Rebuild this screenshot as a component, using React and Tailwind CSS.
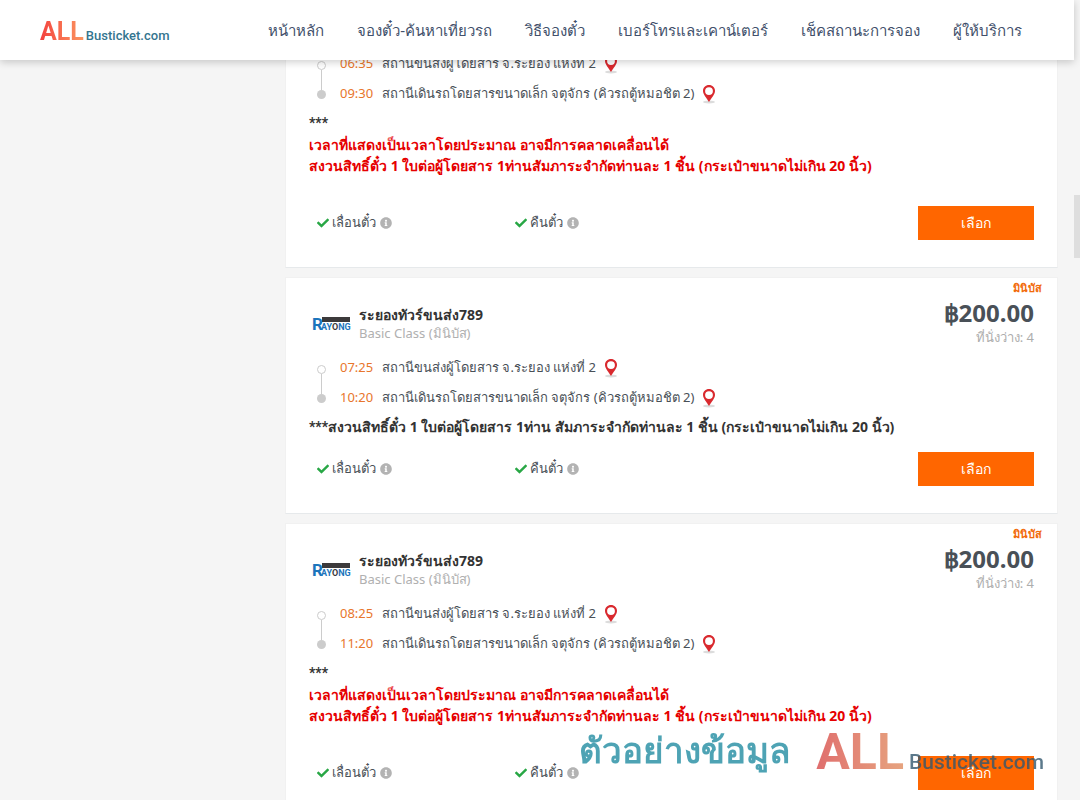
import { FaCheck, FaInfoCircle } from 'react-icons/fa'

const NAV_ITEMS = [
  'หน้าหลัก',
  'จองตั๋ว-ค้นหาเที่ยวรถ',
  'วิธีจองตั๋ว',
  'เบอร์โทรและเคาน์เตอร์',
  'เช็คสถานะการจอง',
  'ผู้ให้บริการ',
]

const FROM = 'สถานีขนส่งผู้โดยสาร จ.ระยอง แห่งที่ 2'
const TO = 'สถานีเดินรถโดยสารขนาดเล็ก จตุจักร (คิวรถตู้หมอชิต 2)'
const OPERATOR = 'ระยองทัวร์ขนส่ง789'

const RED_NOTES = [
  'เวลาที่แสดงเป็นเวลาโดยประมาณ อาจมีการคลาดเคลื่อนได้',
  'สงวนสิทธิ์ตั๋ว 1 ใบต่อผู้โดยสาร 1ท่านสัมภาระจำกัดท่านละ 1 ชิ้น (กระเป๋าขนาดไม่เกิน 20 นิ้ว)',
]

const TRIPS = [
  { id: 1, depart: '06:35', arrive: '09:30', note: '', warnings: RED_NOTES },
  {
    id: 2,
    operator: OPERATOR,
    depart: '07:25',
    arrive: '10:20',
    note: 'สงวนสิทธิ์ตั๋ว 1 ใบต่อผู้โดยสาร 1ท่าน สัมภาระจำกัดท่านละ 1 ชิ้น (กระเป๋าขนาดไม่เกิน 20 นิ้ว)',
    warnings: [],
  },
  { id: 3, operator: OPERATOR, depart: '08:25', arrive: '11:20', note: '', warnings: RED_NOTES },
]

function PinIcon() {
  return (
    <svg width="16" height="20" viewBox="0 0 16 20" aria-hidden="true">
      <ellipse cx="8" cy="18" rx="6" ry="1.5" fill="#dcdcdc" />
      <path
        fillRule="evenodd"
        fill="#d9292e"
        d="M8 1C4.600 1 2 3.500 2 6.700 2 10.500 5.500 13.500 8 18c2.500-4.500 6-7.500 6-11.300C14 3.500 11.400 1 8 1zm0 2.200a3.900 3.900 0 1 1 0 7.800 3.900 3.900 0 0 1 0-7.800z"
      />
    </svg>
  )
}

function RayongLogo() {
  return (
    <svg width="40" height="18" viewBox="0 0 40 18" role="img" aria-label="Rayong" fontFamily="Roboto" fontWeight="700">
      <rect x="11" y="1" width="28" height="5" fill="#3c3a3b" />
      <text x="1" y="14" fontSize="17" fill="#1c75bc">R</text>
      <text x="10" y="14" fontSize="9" fill="#1c75bc">
        AY<tspan fill="#3c3a3b">O</tspan>NG
      </text>
    </svg>
  )
}

function Stop({ time, place }) {
  return (
    <li className="flex h-[30px] items-center">
      <time className="w-[42px] shrink-0 text-[#e8762c]">{time}</time>
      <span className="text-[#495057]">{place}</span>
      <button type="button" aria-label="แผนที่" className="ml-[7px] cursor-pointer">
        <PinIcon />
      </button>
    </li>
  )
}

function Option({ label }) {
  return (
    <div className="flex w-[198px] items-center gap-[3px] text-[#495057]">
      <FaCheck className="size-3 text-[#28a745]" />
      <span>{label}</span>
      <FaInfoCircle className="ml-px size-3 text-[#b3b3b3]" />
    </div>
  )
}

function TripHeader({ operator }) {
  return (
    <>
      <span className="absolute top-1 right-[15px] text-[11px] leading-3 font-bold text-[#f26a0a]">มินิบัส</span>
      <header className="box-content flex h-[54px] items-start justify-between pt-[21px]">
        <div className="flex items-center gap-2 pt-[6px]">
          <div className="pt-1 pl-[2px]">
            <RayongLogo />
          </div>
          <div>
            <h2 className="text-sm leading-5 font-bold text-[#333]">{operator}</h2>
            <p className="leading-4 text-[#b0b0b0]">Basic Class (มินิบัส)</p>
          </div>
        </div>
        <div className="text-right">
          <p className="text-2xl leading-7 font-bold text-[#495057]">฿200.00</p>
          <p className="leading-5 text-[#adadad]">ที่นั่งว่าง: 4</p>
        </div>
      </header>
    </>
  )
}

function TripCard({ trip }) {
  return (
    <article className="relative border border-[#f1f1f1] border-b-[#e6e9eb] bg-white px-[23px] pb-[27px] text-[13px]">
      {trip.operator && <TripHeader operator={trip.operator} />}

      <div className="flex">
        <div className="mt-3 flex w-[31px] flex-col items-start pl-2">
          <span className="size-[9px] rounded-full border border-[#ccc]" />
          <span className="ml-1 h-5 w-px bg-[#ccc]" />
          <span className="size-[9px] rounded-full bg-[#ccc]" />
        </div>
        <ol>
          <Stop time={trip.depart} place={FROM} />
          <Stop time={trip.arrive} place={TO} />
        </ol>
      </div>

      <div className="mt-[3px] text-sm leading-[21px] font-bold">
        <p className="text-[#333]">
          <span className="font-['Roboto',sans-serif]">***</span>
          {trip.note}
        </p>
        {trip.warnings.length > 0 && (
          <div className="pb-4 text-[#e60000]">
            {trip.warnings.map((text) => (
              <p key={text}>{text}</p>
            ))}
          </div>
        )}
      </div>

      <div className="flex items-center pt-[14px] pl-2">
        <Option label="เลื่อนตั๋ว" />
        <Option label="คืนตั๋ว" />
        <button type="button" className="ml-auto h-[34px] w-[116px] cursor-pointer bg-[#ff6600] text-sm text-white">
          เลือก
        </button>
      </div>
    </article>
  )
}

export default function App() {
  return (
    <div className="flex h-screen overflow-hidden bg-[#f5f5f5] font-['Noto_Sans',sans-serif]">
      <div className="min-w-0 flex-1">
        <header className="relative z-10 flex h-[60px] items-center bg-white pr-[52px] pl-10 shadow-[0_2px_8px_rgba(0,0,0,0.2)]">
          <a href="#" className="flex items-baseline gap-[2px] pt-1 font-['Roboto',sans-serif]">
            <span className="bg-linear-to-r from-[#f33f3f] to-[#fa9460] bg-clip-text text-[25px] font-bold text-transparent">
              ALL
            </span>
            <span className="text-[13px] font-medium text-[#34758f]">Busticket.com</span>
          </a>
          <nav className="ml-auto flex gap-[33px] text-[15px] whitespace-nowrap text-[#42506b]">
            {NAV_ITEMS.map((item) => (
              <a key={item} href="#">
                {item}
              </a>
            ))}
          </nav>
        </header>

        <div className="-mt-3 flex">
          <aside className="w-[285px] shrink-0" />
          <main className="mr-4 flex flex-1 flex-col gap-[9px]">
            {TRIPS.map((trip) => (
              <TripCard key={trip.id} trip={trip} />
            ))}
          </main>
        </div>
      </div>

      <div className="w-[6px]">
        <div className="mt-[195px] h-[63px] bg-[#dedede]" />
      </div>

      {/* sample data watermark */}
      <div className="pointer-events-none fixed right-9 bottom-[10px] z-20 flex items-end gap-[26px] opacity-80">
        <span className="pb-5 text-[35px] leading-10 font-bold text-[#228da2]">ตัวอย่างข้อมูล</span>
        <span className="flex items-baseline gap-[5px] font-['Roboto',sans-serif]">
          <span className="bg-linear-to-r from-[#d84a4a] to-[#e08d60] bg-clip-text text-[50px] font-bold text-transparent">
            ALL
          </span>
          <span className="text-[21px] font-medium text-[#33586e]">Busticket.com</span>
        </span>
      </div>
    </div>
  )
}
